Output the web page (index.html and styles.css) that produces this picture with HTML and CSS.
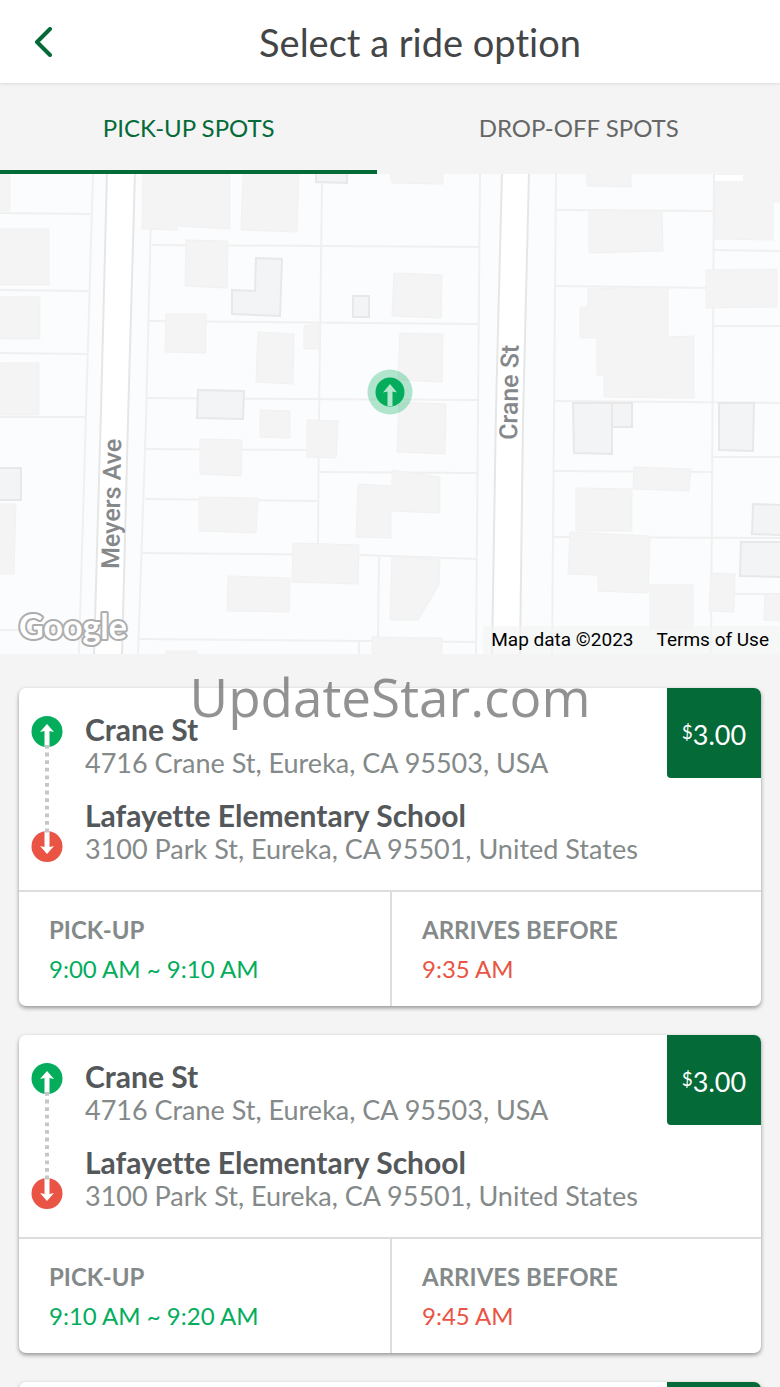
FILE: index.html
```html
<!DOCTYPE html>
<html lang="en">
<head>
  <meta charset="UTF-8" />
  <meta name="viewport" content="width=device-width, initial-scale=1.0" />
  <title>Select a ride option</title>
  <link rel="stylesheet" href="styles.css">
</head>
<body>
  <!-- Shared icon: both stops with the dotted line between them -->
  <svg class="sprite" aria-hidden="true">
    <symbol id="route-line" viewBox="0 0 32 146">
      <circle cx="16" cy="15.5" r="15.5" fill="#03ad5c" />
      <path d="M16 8 L23 16 L18.5 15 V30.5 H13.5 V15 L9 16 Z" fill="#fff" />
      <circle cx="16" cy="130.5" r="15.5" fill="#e95445" />
      <path d="M16 138 L23 130 L18.5 131 V115 H13.5 V131 L9 130 Z" fill="#fff" />
      <path d="M16 29 V118" stroke="#c4c6c7" stroke-width="4" stroke-dasharray="3.8 3.8" />
    </symbol>
  </svg>

  <header class="topbar">
    <button type="button" class="back" aria-label="Back">
      <svg width="18" height="30" viewBox="0 0 18 30" aria-hidden="true">
        <path d="M16 2 L3 15 L16 28" fill="none" stroke="#046a38" stroke-width="4" stroke-linecap="round" stroke-linejoin="round" />
      </svg>
    </button>
    <h1>Select a ride option</h1>
  </header>

  <nav class="tabs">
    <button type="button" class="tab active">PICK-UP SPOTS</button>
    <button type="button" class="tab">DROP-OFF SPOTS</button>
  </nav>

  <section class="map" aria-label="Map">
    <svg class="map-canvas" viewBox="0 0 780 480" preserveAspectRatio="xMidYMid slice">
      <!-- lot lines -->
      <g class="lots">
        <path d="M93 0 L86 240 L79 480 M152 0 L146 246 L138 480 M322 8 L319 246 L318 371 M379 383 L378 466 M359 467 V480" />
        <path d="M480 0 L478 240 L476 480 M556 0 L554 246 L552 480 M714 0 L711 480" />
        <path d="M0 39 L93 40 M0 116 L90 117 M0 179 L88 180 M0 243 H86 M0 456 H80" />
        <path d="M152 71 L480 73 M149 147 L479 150 M147 224 L478 226 M145 275 L307 276 M320 298 L477 299 M145 325 L318 327 M142 379 L360 381 L477 385 M138 465 L476 468" />
        <path d="M556 36 L714 37 M556 112 L714 114 M714 76 L780 77 M713 152 H780 M554 227 L780 229 M554 297 L712 298 M713 283 H780 M554 363 L780 364 M733 420 H780" />
      </g>
      <!-- streets -->
      <g class="streets">
        <path d="M107 -2 L101 236 L94 482 H122 L128 246 L135 -2 Z" />
        <path d="M502 -2 L496 236 L492 482 H520 L523 246 L529 -2 Z" />
      </g>
      <!-- buildings -->
      <g class="buildings">
        <path d="M0 0 H10 V37 H0 Z M0 55 H49 V111 H0 Z M0 123 H40 V165 H0 Z M0 189 H39 V241 H0 Z M0 330 H16 L14 400 H0 Z" />
        <path d="M143 0 H230 V55 L177 52 V56 L142 55 Z M243 0 H299 L297 58 L241 56 Z M186 66 L228 67 L227 114 L185 112 Z" />
        <path d="M166 140 H206 V179 L165 178 Z M258 158 L294 160 L293 210 L256 208 Z M304 152 L319 150 V175 H304 Z" />
        <path d="M260 236 L290 237 V264 L260 263 Z M307 246 L338 247 L336 284 L307 283 Z M200 265 L242 266 L241 302 L200 300 Z" />
        <path d="M199 323 L258 324 L256 359 L199 357 Z M228 402 L290 404 L289 438 L227 437 Z M293 369 L359 371 L358 410 L292 408 Z" />
        <path d="M390 0 H443 V10 L392 9 Z M394 99 L442 101 L441 144 L392 142 Z M400 159 L443 160 L442 208 L398 206 Z" />
        <path d="M399 228 L446 230 L445 280 L397 278 Z M392 296 L440 303 L440 339 L392 337 Z M358 310 L391 312 V364 L356 363 Z" />
        <path d="M392 382 L440 386 L439 411 L418 446 L390 446 Z M372 463 L442 464 V480 H372 Z M166 477 H197 V480 H166 Z" />
        <path d="M586 0 H631 V13 L587 12 Z M589 38 H662 L663 77 L589 79 Z M588 115 L668 113 V163 L694 162 V224 L604 223 V201 H597 V164 H580 V133 H588 Z" />
        <path d="M716 0 H780 V28 H773 V66 L715 65 Z M706 96 L777 95 V133 L706 134 Z M634 293 L691 295 L689 317 L633 315 Z" />
        <path d="M576 314 L632 315 V357 H576 Z M570 358 L650 362 L648 419 L598 417 V401 L568 400 Z M650 411 H693 V455 H650 Z" />
        <path d="M711 399 L735 400 L734 438 L709 437 Z M765 420 H780 V447 L764 446 Z" />
      </g>
      <path d="M715 1 H743 V7 H715 Z" fill="#fff" />
      <g class="buildings outlined">
        <path d="M316 -2 H347 V9 L316 8 Z M256 84 L282 85 L280 142 L232 140 V116 L255 117 Z M353 122 H369 V143 H353 Z M198 216 L244 217 L243 245 L197 244 Z" />
        <path d="M-2 294 L21 294 V326 H-2 Z M573 229 H632 V253 H612 V280 L574 279 Z M612 229 V253 M719 229 H754 L753 277 L719 276 Z" />
        <path d="M753 330 L782 331 V361 L752 360 Z M741 368 H782 V403 L740 402 Z" />
      </g>
      <!-- street names -->
      <text class="street-name" transform="translate(119 395) rotate(-89)">Meyers Ave</text>
      <text class="street-name" transform="translate(517 266) rotate(-89)">Crane St</text>
      <text class="map-logo" x="19" y="465">Google</text>
      <!-- pick-up pin -->
      <circle cx="390" cy="218" r="22.5" fill="#03ad5c" fill-opacity=".3" />
      <circle cx="390" cy="218" r="14.5" fill="#03ad5c" />
      <path d="M390 210 L397 218.5 L392.5 217.5 V232 H387.5 V217.5 L383 218.5 Z" fill="#b5e6ce" />
    </svg>
    <div class="attribution">
      <span>Map data ©2023</span>
      <a href="#">Terms of Use</a>
    </div>
  </section>

  <main class="rides">
    <div class="watermark">UpdateStar.com</div>

    <article class="ride">
      <div class="route">
        <svg class="route-line" aria-hidden="true"><use href="#route-line" /></svg>
        <div class="stops">
          <div class="stop">
            <h2>Crane St</h2>
            <p>4716 Crane St, Eureka, CA 95503, USA</p>
          </div>
          <div class="stop">
            <h2>Lafayette Elementary School</h2>
            <p>3100 Park St, Eureka, CA 95501, United States</p>
          </div>
        </div>
        <div class="price"><span class="currency">$</span>3.00</div>
      </div>
      <dl class="times">
        <div class="time">
          <dt>PICK-UP</dt>
          <dd class="pickup">9:00 AM ~ 9:10 AM</dd>
        </div>
        <div class="time">
          <dt>ARRIVES BEFORE</dt>
          <dd class="arrival">9:35 AM</dd>
        </div>
      </dl>
    </article>

    <article class="ride">
      <div class="route">
        <svg class="route-line" aria-hidden="true"><use href="#route-line" /></svg>
        <div class="stops">
          <div class="stop">
            <h2>Crane St</h2>
            <p>4716 Crane St, Eureka, CA 95503, USA</p>
          </div>
          <div class="stop">
            <h2>Lafayette Elementary School</h2>
            <p>3100 Park St, Eureka, CA 95501, United States</p>
          </div>
        </div>
        <div class="price"><span class="currency">$</span>3.00</div>
      </div>
      <dl class="times">
        <div class="time">
          <dt>PICK-UP</dt>
          <dd class="pickup">9:10 AM ~ 9:20 AM</dd>
        </div>
        <div class="time">
          <dt>ARRIVES BEFORE</dt>
          <dd class="arrival">9:45 AM</dd>
        </div>
      </dl>
    </article>

    <article class="ride">
      <div class="route">
        <div class="price"></div>
      </div>
    </article>
  </main>
</body>
</html>
```
FILE: styles.css
```css
* {
  box-sizing: border-box;
}

body {
  margin: 0;
  height: 100vh;
  display: flex;
  flex-direction: column;
  overflow: hidden;
  background: #f4f4f4;
  font-family: Lato, "Liberation Sans", sans-serif;
  font-variant-ligatures: none;
}

h1, h2, p, dl, dd {
  margin: 0;
}

button {
  border: none;
  background: none;
  padding: 0;
  font-family: inherit;
  cursor: pointer;
}

.sprite {
  display: none;
}

/* Header */
.topbar {
  flex: none;
  display: flex;
  align-items: center;
  height: 83px;
  background: #fff;
  box-shadow: 0 1px 3px rgba(0, 0, 0, 0.1);
  z-index: 1;
}

.back {
  width: 60px;
  padding-left: 34px;
  display: flex;
}

.topbar h1 {
  flex: 1;
  text-align: center;
  font-size: 38px;
  font-weight: 400;
  color: #434546;
}

.tabs {
  flex: none;
  display: grid;
  grid-template-columns: 15fr 16fr;
  height: 91px;
}

.tab {
  padding-top: 2px;
  font-size: 24px;
  color: #666;
  border-bottom: 4px solid transparent;
}

.tab.active {
  color: #046a38;
  border-bottom-color: #046a38;
}

/* Map */
.map {
  flex: none;
  position: relative;
  height: 480px;
  background: #fbfcfd;
}

.map-canvas {
  display: block;
  width: 100%;
  height: 100%;
}

.lots {
  fill: none;
  stroke: #f0f0f0;
  stroke-width: 2;
}

.streets {
  fill: #fff;
  stroke: #e6e6e7;
  stroke-width: 2;
}

.buildings {
  fill: #f4f4f4;
  stroke: #f1f1f1;
}

.outlined {
  fill: #f3f4f5;
  stroke: #e8e8e9;
  stroke-width: 2;
}

.street-name {
  font-family: Roboto, sans-serif;
  font-size: 25px;
  font-weight: 500;
  fill: #85888b;
}

.map-logo {
  font-family: Lato, sans-serif;
  font-size: 34px;
  font-weight: 700;
  fill: #fff;
  stroke: #adadad;
  stroke-width: 4;
  stroke-linejoin: round;
  paint-order: stroke;
}

.attribution {
  position: absolute;
  right: 0;
  bottom: 0;
  display: flex;
  gap: 23px;
  padding: 2px 11px 2px 8px;
  background: rgba(244, 244, 244, 0.6);
  font-family: Roboto, sans-serif;
  font-size: 19px;
  line-height: 24px;
  color: #000;
}

.attribution a {
  color: inherit;
  text-decoration: none;
}

/* Ride cards */
.rides {
  flex: 1;
  min-height: 0;
  position: relative;
  overflow: hidden;
  display: flex;
  flex-direction: column;
  gap: 29px;
  padding: 34px 19px 0;
}

.watermark {
  position: absolute;
  top: 8px;
  left: 0;
  right: 0;
  z-index: 1;
  text-align: center;
  font-family: "Open Sans", sans-serif;
  font-size: 53px;
  line-height: 70px;
  color: rgba(100, 100, 100, 0.7);
  pointer-events: none;
}

.ride {
  flex: none;
  background: #fff;
  border-radius: 7px;
  overflow: hidden;
  box-shadow: 0 2px 4px rgba(0, 0, 0, 0.4);
}

.route {
  display: flex;
  align-items: flex-start;
  height: 202px;
}

.route-line {
  flex: none;
  width: 32px;
  height: 146px;
  margin: 28px 22px 0 12px;
}

.stops {
  flex: 1;
  display: flex;
  flex-direction: column;
  gap: 20px;
  padding-top: 25px;
}

.stop h2 {
  font-size: 30px;
  line-height: 33px;
  font-weight: 700;
  color: #54585a;
}

.stop p {
  font-size: 27px;
  line-height: 33px;
  color: #848989;
  white-space: nowrap;
}

.price {
  flex: none;
  display: flex;
  align-items: center;
  justify-content: center;
  width: 94px;
  height: 90px;
  margin-left: auto;
  padding-top: 2px;
  border-bottom-left-radius: 4px;
  background: #046a38;
  font-size: 27px;
  color: #fff;
}

.currency {
  font-size: 19px;
  padding-bottom: 6px;
}

.times {
  display: grid;
  grid-template-columns: 1fr 1fr;
  border-top: 2px solid #dcdede;
}

.time {
  height: 114px;
  padding: 22px 30px;
}

.time + .time {
  border-left: 2px solid #dcdede;
}

.time dt {
  font-size: 24px;
  line-height: 32px;
  font-weight: 700;
  color: #848989;
}

.time dd {
  margin-top: 7px;
  font-size: 24px;
  line-height: 32px;
}

.pickup {
  color: #03ad5c;
}

.arrival {
  color: #e95445;
}
```
